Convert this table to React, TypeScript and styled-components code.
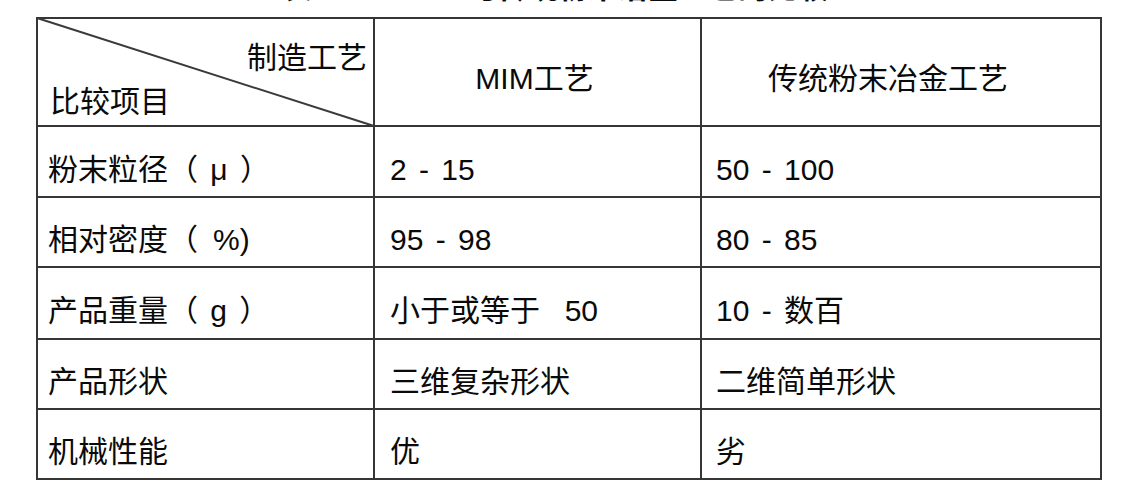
import styled, { createGlobalStyle } from 'styled-components';

const GlobalStyle = createGlobalStyle`
  html, body {
    margin: 0;
    padding: 0;
    background: #ffffff;
  }
  body {
    font-family: 'Liberation Sans', 'Noto Sans CJK SC', Arial, sans-serif;
    color: #0a0a0a;
    overflow: hidden;
  }
`;

type Row = { item: string; mim: string; pm: string };

const rows: Row[] = [
  { item: '粉末粒径（ μ ）', mim: '2 - 15', pm: '50 - 100' },
  { item: '相对密度（\u2002%)', mim: '95 - 98', pm: '80 - 85' },
  { item: '产品重量（ g ）', mim: '小于或等于  50', pm: '10 - 数百' },
  { item: '产品形状', mim: '三维复杂形状', pm: '二维简单形状' },
  { item: '机械性能', mim: '优', pm: '劣' },
];

const rowHeights = [69, 68, 70, 68, 68];

// 表头斜线格 + 数据行
const App = () => {
  return (
    <Page>
      <GlobalStyle />
      <Title>表 1 - 1　MIM与传统粉末冶金工艺的比较</Title>
      <Grid>
        <CornerCell>
          <Diagonal viewBox="0 0 100 100" preserveAspectRatio="none">
            <line x1="0" y1="0" x2="100" y2="100" stroke="#3a3a3a" strokeWidth="2" vectorEffect="non-scaling-stroke" />
          </Diagonal>
          <CornerTop>制造工艺</CornerTop>
          <CornerBottom>比较项目</CornerBottom>
        </CornerCell>
        <HeadCell $shift={6}>MIM工艺</HeadCell>
        <HeadCell $shift={26}>传统粉末冶金工艺</HeadCell>

        {rows.map((row, i) => (
          <Line key={row.item} $h={rowHeights[i]}>
            <Cell $pad={10}>{row.item}</Cell>
            <Cell $pad={15}>{row.mim}</Cell>
            <Cell $pad={14}>{row.pm}</Cell>
          </Line>
        ))}
      </Grid>
    </Page>
  );
};

export default App;

const Page = styled.div`
  padding: 0 0 0 36px;
  width: 1066px;
`;

const Title = styled.div`
  margin-top: -27px;
  margin-bottom: 14px;
  padding-right: 28px;
  font-size: 30px;
  line-height: 30px;
  font-weight: 700;
  text-align: center;
  white-space: nowrap;
`;

const Grid = styled.div`
  display: grid;
  grid-template-columns: 335px 325px 398px;
  grid-auto-rows: auto;
  gap: 2px;
  padding: 2px;
  background: #363636;
`;

const Line = styled.div<{ $h: number }>`
  display: contents;

  & > div {
    height: ${(p) => p.$h}px;
  }
`;

const Cell = styled.div<{ $pad: number }>`
  display: flex;
  align-items: center;
  box-sizing: border-box;
  padding: 16px 0 0 ${(p) => p.$pad}px;
  background: #ffffff;
  font-size: 30px;
  line-height: 30px;
  word-spacing: 4px;
  white-space: pre;
`;

const HeadCell = styled.div<{ $shift?: number }>`
  display: flex;
  align-items: center;
  justify-content: center;
  box-sizing: border-box;
  height: 106px;
  padding: 14px ${(p) => p.$shift ?? 0}px 0 0;
  background: #ffffff;
  font-size: 30px;
  line-height: 30px;
`;

const CornerCell = styled.div`
  position: relative;
  display: flex;
  flex-direction: column;
  justify-content: space-between;
  box-sizing: border-box;
  height: 106px;
  padding: 24px 6px 8px 12px;
  background: #ffffff;
  font-size: 30px;
  line-height: 30px;
`;

const Diagonal = styled.svg`
  position: absolute;
  left: -1px;
  top: -1px;
  width: calc(100% + 2px);
  height: calc(100% + 2px);
  overflow: visible;
`;

const CornerTop = styled.div`
  position: relative;
  align-self: flex-end;
`;

const CornerBottom = styled.div`
  position: relative;
  align-self: flex-start;
`;
